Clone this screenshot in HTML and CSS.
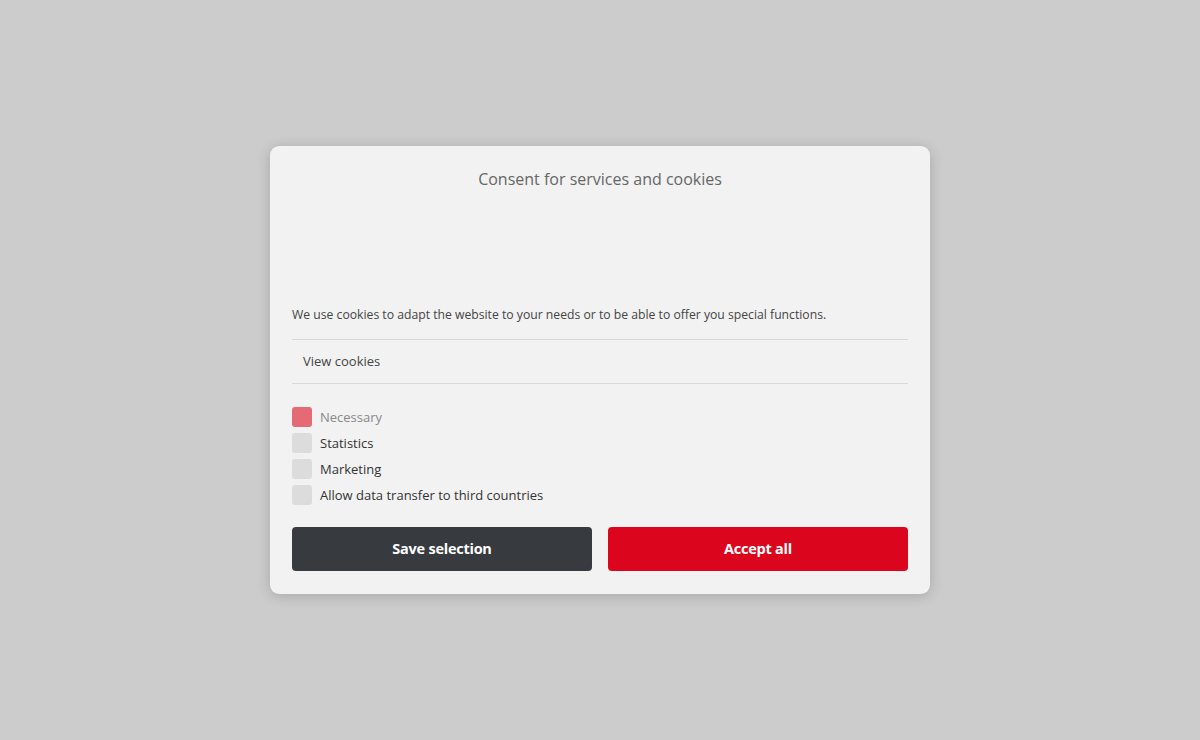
FILE: index.html
```html
<!DOCTYPE html>
<html lang="en">
<head>
<meta charset="utf-8">
<title>Consent</title>
<link rel="stylesheet" href="styles.css">
</head>
<body>
<div class="overlay">
  <div class="modal">
    <h2 class="title">Consent for services and cookies</h2>
    <div class="logo-space"></div>
    <p class="desc">We use cookies to adapt the website to your needs or to be able to offer you special functions.</p>
    <div class="view-row">View cookies</div>
    <ul class="options">
      <li class="option disabled"><span class="box box-on"></span>Necessary</li>
      <li class="option"><span class="box"></span>Statistics</li>
      <li class="option"><span class="box"></span>Marketing</li>
      <li class="option"><span class="box"></span>Allow data transfer to third countries</li>
    </ul>
    <div class="buttons">
      <button class="btn btn-dark">Save selection</button>
      <button class="btn btn-red">Accept all</button>
    </div>
  </div>
</div>
</body>
</html>
```
FILE: styles.css
```css
html, body {
  margin: 0;
  padding: 0;
}
body {
  background: #cccccc;
  font-family: "Open Sans", "Noto Sans", "Liberation Sans", sans-serif;
}
.overlay {
  height: 740px;
  display: flex;
  align-items: center;
  justify-content: center;
}
.modal {
  width: 660px;
  box-sizing: border-box;
  padding: 22px 22px 23px;
  background: #f2f2f2;
  border-radius: 9px;
  box-shadow: 0 2px 14px rgba(0, 0, 0, 0.18);
}
.title {
  margin: 0;
  font-size: 16px;
  line-height: 22px;
  font-weight: 400;
  color: #666;
  text-align: center;
}
.logo-space {
  height: 115px;
}
.desc {
  margin: 0 0 14px;
  font-size: 12.2px;
  line-height: 20px;
  color: #444;
}
.view-row {
  border-top: 1px solid #d9d9d9;
  border-bottom: 1px solid #d9d9d9;
  height: 43px;
  line-height: 43px;
  padding-left: 11px;
  font-size: 13px;
  color: #444;
}
.options {
  list-style: none;
  margin: 23px 0 0;
  padding: 0;
  display: flex;
  flex-direction: column;
  gap: 6px;
}
.option {
  display: flex;
  align-items: center;
  height: 20px;
  font-size: 13px;
  color: #333;
}
.option.disabled {
  color: #888;
}
.box {
  width: 20px;
  height: 20px;
  border-radius: 3px;
  background: #dcdcdc;
  margin-right: 8px;
  flex: none;
}
.box-on {
  background: #e46a76;
}
.buttons {
  margin-top: 22px;
  display: flex;
  gap: 16px;
}
.btn {
  flex: 1;
  height: 44px;
  padding: 0 0 2px;
  border: none;
  border-radius: 4px;
  color: #fff;
  font-family: "Open Sans", "Noto Sans", "Liberation Sans", sans-serif;
  font-size: 14.5px;
  font-weight: 700;
  letter-spacing: -0.25px;
  cursor: pointer;
}
.btn-dark {
  background: #373a3e;
}
.btn-red {
  background: #db061d;
}
```
